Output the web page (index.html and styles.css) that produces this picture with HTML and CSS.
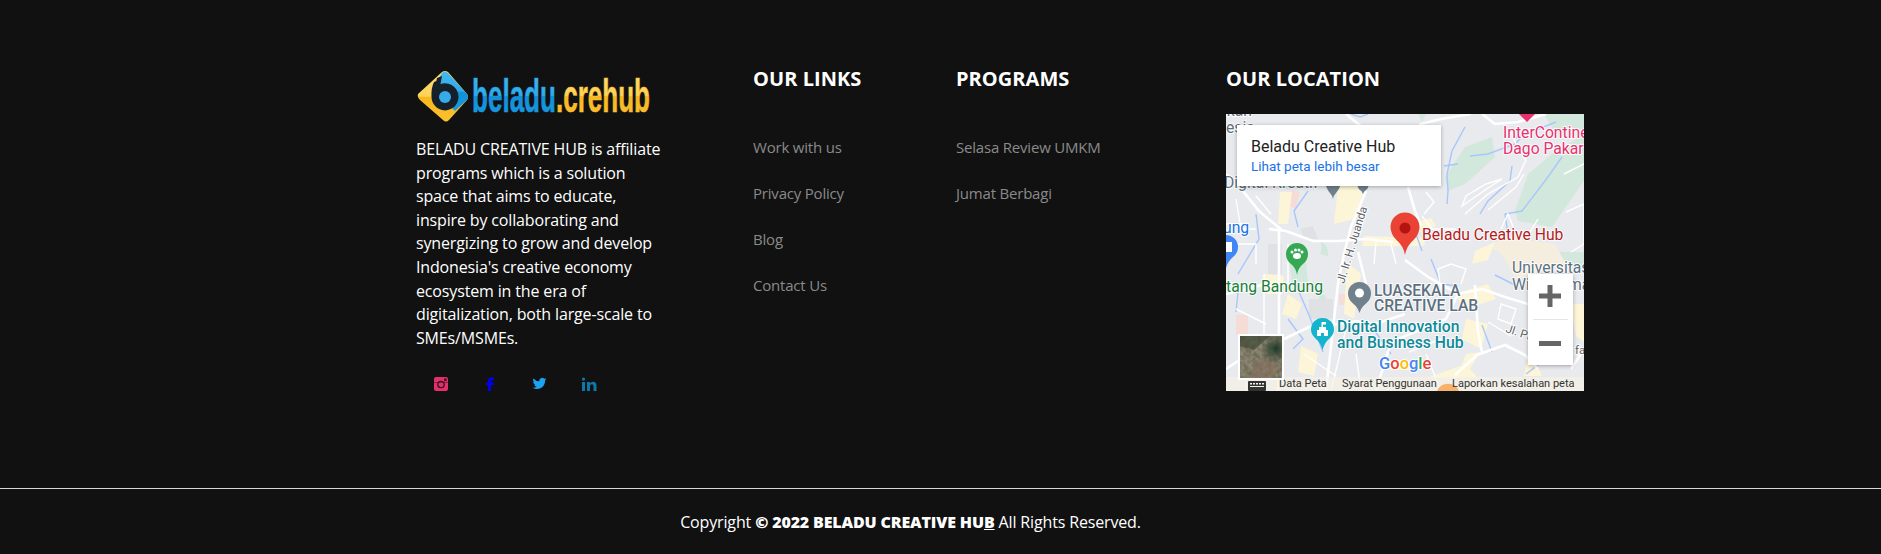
FILE: index.html
```html
<!DOCTYPE html>
<html lang="en">
<head>
<meta charset="utf-8">
<title>Beladu Creative Hub</title>
<link rel="stylesheet" href="styles.css">
</head>
<body>
<footer class="footer">
  <div class="columns">
    <section class="about">
      <svg class="logo" viewBox="0 0 240 54" width="240" height="54" role="img">
        <defs>
          <linearGradient id="blue" x1="0" y1="0" x2="0" y2="1"><stop offset="0" stop-color="#45b9f0"/><stop offset=".5" stop-color="#2faae9"/><stop offset=".52" stop-color="#0f90da"/><stop offset="1" stop-color="#1a9be0"/></linearGradient>
          <linearGradient id="gold" x1="0" y1="0" x2="0" y2="1"><stop offset="0" stop-color="#ffdc72"/><stop offset=".5" stop-color="#fed255"/><stop offset=".52" stop-color="#f8b71f"/><stop offset="1" stop-color="#fcc130"/></linearGradient>
        </defs>
        <path d="M2 24 L26 2 Q29 0 32 2 L51 24 Q53 27 51 30 L33 50 Q30 53 27 50 L4 30 Q1 27 2 24Z" fill="url(#gold)"/>
        <path d="M20 13 L26 3 Q29 0 32 3 L51 24 Q53 27 51 30 L39 41 L28 30Z" fill="url(#blue)"/>
        <path d="M18 12 L23 10 L21 16 A13.500 13.500 0 1 1 15.500 27 Q15 18 18 12Z" fill="#16202a"/>
        <path d="M21 8 L18 22 L23 22 L26 6Z" fill="#16202a"/>
        <circle cx="29" cy="27" r="6" fill="#35ace9"/>
        <text class="logo-text" x="56" y="42" textLength="178" lengthAdjust="spacingAndGlyphs"><tspan class="logo-blue">beladu</tspan><tspan class="logo-gold">.crehub</tspan></text>
      </svg>
      <p class="about-text">BELADU CREATIVE HUB is affiliate programs which is a solution space that aims to educate, inspire by collaborating and synergizing to grow and develop Indonesia's creative economy ecosystem in the era of digitalization, both large-scale to SMEs/MSMEs.</p>
      <ul class="social">
        <li><svg viewBox="0 0 14 14" width="14" height="14"><rect width="14" height="14" rx="2" fill="#e1306c"/><circle cx="7" cy="7.500" r="3.200" fill="none" stroke="#3a1020" stroke-width="1.300"/><rect x="10" y="1.500" width="2.600" height="2.600" fill="#3a1020"/><rect y="5" width="14" height="1" fill="#3a1020" opacity=".5"/></svg></li>
        <li><svg viewBox="0 0 14 14" width="14" height="14"><path d="M3 14V8H1V5.500H3V3.500Q3 .5 6.500 .5H9V3.200H7.500Q6 3.200 6 4.500V5.500H9L8.500 8H6V14Z" fill="#0000ee" transform="translate(2 0)"/></svg></li>
        <li><svg viewBox="0 0 24 24" width="15" height="15"><path d="M23 5.100a9 9 0 0 1-2.600.7 4.500 4.500 0 0 0 2-2.500 9 9 0 0 1-2.900 1.100 4.500 4.500 0 0 0-7.700 4.100A12.800 12.800 0 0 1 2.500 3.800a4.500 4.500 0 0 0 1.400 6 4.500 4.500 0 0 1-2-.6c0 2.200 1.500 4 3.600 4.500a4.500 4.500 0 0 1-2 .1 4.500 4.500 0 0 0 4.200 3.100A9 9 0 0 1 1 18.800 12.800 12.800 0 0 0 8 20.800c8.300 0 12.900-6.900 12.900-12.900v-.6A9 9 0 0 0 23 5.100z" fill="#1da1f2"/></svg></li>
        <li><svg viewBox="0 0 15 14" width="15" height="14"><path d="M0 5H3V14H0ZM1.500 .5A1.600 1.600 0 1 1 1.500 3.700 1.600 1.600 0 0 1 1.500 .5ZM5 5H8V6.300Q9 4.800 11 4.800 14.500 4.800 14.500 9V14H11.500V9.500Q11.500 7.300 9.800 7.300 8 7.300 8 9.500V14H5Z" fill="#0e76a8"/></svg></li>
      </ul>
    </section>
    <nav class="link-col">
      <h4 class="col-title">OUR LINKS</h4>
      <ul class="links">
        <li><a>Work with us</a></li>
        <li><a>Privacy Policy</a></li>
        <li><a>Blog</a></li>
        <li><a>Contact Us</a></li>
      </ul>
    </nav>
    <nav class="link-col">
      <h4 class="col-title">PROGRAMS</h4>
      <ul class="links">
        <li><a>Selasa Review UMKM</a></li>
        <li><a>Jumat Berbagi</a></li>
      </ul>
    </nav>
    <section class="location">
      <h4 class="col-title">OUR LOCATION</h4>
      <div class="map">
        <svg class="map-canvas" viewBox="0 0 358 277" width="358" height="277">
          <rect width="358" height="277" fill="#e8eaed"/>
          <g fill="#d3e8dc">
            <path d="M219 63L239 33L266 23L269 43L239 70L222 77Z"/>
            <path d="M289 97L302 60L326 40L358 20V67L342 90L326 113L292 107Z"/>
            <path d="M318 0H358V15L330 20Z"/>
            <path d="M192 0H200L196 8Z"/>
            <path d="M318 138H358V160L340 150Z"/>
            <path d="M93 181H99L101 190H94Z"/>
            <path d="M63 148L80 148L82 168H66Z"/>
            <path d="M94 127Q103 130 102 142L94 140Q97 133 94 127Z"/>
          </g>
          <g fill="#f5eede">
            <path d="M262 132L279 123L329 130L340 150L290 165L276 140Z"/>
          </g>
          <g fill="#dfe1e5">
            <path d="M83 185H107V205H83Z"/><path d="M74 115L87 112L92 125L78 125Z"/><path d="M42 130H56V160H42Z"/>
          </g>
          <g fill="#f6dcd6">
            <path d="M10 201H22V221H10Z"/><path d="M113 180H120V191H113Z"/><path d="M66 76L74 78L70 95L64 92Z"/>
          </g>
          <g fill="#fdf5d8">
            <path d="M112 72L140 72L128 105L108 110Z"/>
            <path d="M54 78L66 78L62 110L52 110Z"/>
            <path d="M138 122L200 124L198 132L136 132Z"/>
            <path d="M62 180L76 190L70 205L56 200Z"/>
            <path d="M38 160L58 162L56 180L40 180Z"/>
            <path d="M121 148L135 160L128 205L118 200Z"/>
            <path d="M249 137L269 128L262 146L246 150Z"/>
            <path d="M228 180L262 170L270 185L240 195Z"/>
            <path d="M240 205L262 210L255 235L236 225Z"/>
            <path d="M155 252L172 245L186 256H165Z"/>
            <path d="M240 240L254 238L240 262L232 260Z"/>
            <path d="M304 232L316 262H298Z"/>
            <path d="M75 232L92 240L88 262L72 258Z"/>
            <path d="M200 264L240 250L252 264Z"/>
            <path d="M190 108L205 104L210 112L192 118Z"/>
            <path d="M344 190L358 190V228L350 222Z"/>
          </g>
          <g fill="none" stroke="#a8c7fa" stroke-width="1.400">
            <path d="M239 13L226 37L221 60L222 77L221 90"/>
            <path d="M244 42L262 40L289 30L299 20"/>
            <path d="M286 52L284 67L262 87L254 100"/>
            <path d="M336 43L319 67L296 97L279 100L282 120"/>
            <path d="M82 77L68 97L72 113"/>
            <path d="M70 171L83 201L97 238"/>
            <path d="M12 178L10 198"/>
            <path d="M62 205L77 225L67 235"/>
            <path d="M269 161L289 171"/>
            <path d="M256 211L266 238"/>
            <path d="M125 0L134 3L142 0"/>
            <path d="M218 52L232 50"/>
            <path d="M190 120L196 137"/>
            <path d="M330 8L290 24"/>
            <path d="M30 100L33 125L12 160"/>
            <path d="M205 145L215 170L232 172"/>
            <path d="M300 260L340 230"/>
            <path d="M144 210L165 240"/>
          </g>
          <g fill="none" stroke="#fff" stroke-width="2.600">
            <path d="M140 77L125 113L118 140L112 170L100 277"/>
            <path d="M43 115L60 117L87 127L113 127L140 125L167 128"/>
            <path d="M0 60L17 77L33 97L57 117"/>
            <path d="M53 117L53 222L52 277"/>
            <path d="M58 225L83 213L110 210L130 207L150 210L179 200"/>
            <path d="M132 138L140 170"/>
            <path d="M179 146L202 163L232 180L256 175L279 183L302 190L345 201"/>
            <path d="M249 171L252 218L256 238"/>
            <path d="M229 261L251 241L279 231L299 241L312 255"/>
            <path d="M182 73L189 97L195 112"/>
            <path d="M175 35L195 10L215 5L245 0"/>
            <path d="M256 0L269 10L292 8L320 0"/>
            <path d="M0 180L40 170L55 180"/>
            <path d="M232 180L220 205L165 228L150 277"/>
            <path d="M0 255L30 235L53 225"/>
            <path d="M120 0L142 18L175 35"/>
            <path d="M345 255L358 235"/>
          </g>
          <g fill="none" stroke="#fff" stroke-width="1.400">
            <path d="M239 100L262 80L292 63L300 46L296 42"/>
            <path d="M236 92L262 74L276 65L260 70L240 82Z"/>
            <path d="M262 96L290 73L298 60"/>
            <path d="M200 78L208 88L198 100"/>
            <path d="M196 102L206 115L230 115"/>
            <path d="M275 115L282 100L290 120"/>
            <path d="M300 125L312 105"/>
            <path d="M340 98L358 90V130L345 138"/>
            <path d="M338 60L358 50"/>
            <path d="M285 18L290 30"/>
            <path d="M10 85L15 115H30M0 110H20M8 130H30V150"/>
            <path d="M30 82L45 100"/>
            <path d="M10 195L40 210M20 230V277M38 160V277"/>
            <path d="M62 130V170M78 240L110 262"/>
            <path d="M215 175L212 155L225 150L240 155L235 170"/>
            <path d="M275 190L290 195L285 210L272 205Z"/>
            <path d="M262 208L285 222"/>
            <path d="M120 215L105 277M130 240L135 277"/>
            <path d="M165 130L170 150M150 128L148 150"/>
            <path d="M320 210L312 250"/>
            <path d="M200 240L215 277"/>
            <path d="M335 200L328 235"/>
            <path d="M300 150L320 170"/>
            <path d="M183 238L215 225"/>
          </g>
          <text class="lab m-grey" x="-3" y="2">ikan</text>
          <text class="lab m-grey" x="0" y="19">esia</text>
          <text class="lab m-grey" x="-2" y="74">Digital Kreatif</text>
          <text class="lab m-pink" x="277" y="24">InterContinental</text>
          <text class="lab m-pink" x="277" y="40">Dago Pakar</text>
          <text class="lab m-blue" x="-3" y="119">ung</text>
          <text class="lab m-green" x="0" y="178">tang Bandung</text>
          <text class="lab m-grey m-bold" x="148" y="182">LUASEKALA</text>
          <text class="lab m-grey m-bold" x="148" y="197">CREATIVE LAB</text>
          <text class="lab m-teal" x="111" y="218">Digital Innovation</text>
          <text class="lab m-teal" x="111" y="234">and Business Hub</text>
          <text class="lab m-grey" x="286" y="159">Universitas</text>
          <text class="lab m-grey" x="286" y="176">Widyatama</text>
          <text class="lab m-red" x="196" y="126">Beladu Creative Hub</text>
          <text class="road" transform="rotate(-73 118 170)" x="118" y="170">Jl. Ir. H. Juanda</text>
          <text class="road" transform="rotate(18 279 218)" x="279" y="218">Jl. Pr</text>
          <text class="road" x="349" y="240">fa</text>
          <path d="M293 0H309L301 8Z" fill="#e8316f"/>
          <path d="M99 70H115Q113 76 110 79T107 85Q106 81 104 79T99 70Z" fill="#70808d"/>
          <path d="M131 70H143Q142 75 140 76T137 80Q136 77 134 76T131 70Z" fill="#70808d"/>
          <path d="M179 98.500a14.500 14.500 0 0 1 14.500 14.500q0 7-6 13-7 6-8.500 15-1.500-9-8.500-15-6-6-6-13a14.500 14.500 0 0 1 14.500-14.500z" fill="#ea4335"/>
          <circle cx="179" cy="114" r="5.500" fill="#b31412"/>
          <path d="M71 129a11 11 0 0 1 11 11q0 6-5 10-5 4-6 11-1-7-6-11-5-4-5-10a11 11 0 0 1 11-11z" fill="#34a853"/>
          <g fill="#fff"><ellipse cx="71" cy="142" rx="4" ry="3"/><circle cx="66" cy="138" r="1.500"/><circle cx="69.500" cy="136" r="1.500"/><circle cx="73" cy="136" r="1.500"/><circle cx="76" cy="138" r="1.500"/></g>
          <path d="M133.500 168a11.500 11.500 0 0 1 11.500 11.500q0 6-5 10-5 4-6.500 9.500-1.500-5.500-6.500-9.500-5-4-5-10a11.500 11.500 0 0 1 11.500-11.500z" fill="#70808d"/>
          <circle cx="133.500" cy="179" r="4.500" fill="#fff"/>
          <path d="M96.500 204a11.500 11.500 0 0 1 11.500 11.500q0 5-4.500 9-5 4-7 11.500-2-7.500-7-11.500-4.500-4-4.500-9a11.500 11.500 0 0 1 11.500-11.500z" fill="#12b5cb"/>
          <path d="M91 222V216H93V213H95.500V208H100V210.500H97V213H100V216H102V222H98V219H95V222Z" fill="#fff"/>
          <path d="M-12 133a12 12 0 0 1 24 0q0 6-5 10-5 4-7 11-2-7-7-11-5-4-5-10z" fill="#4285f4"/>
          <path d="M0 128H6V138H0Z" fill="#fff"/>
          <text class="g-logo" x="153" y="255"><tspan fill="#4285f4">G</tspan><tspan fill="#ea4335">o</tspan><tspan fill="#fbbc04">o</tspan><tspan fill="#4285f4">g</tspan><tspan fill="#34a853">l</tspan><tspan fill="#ea4335">e</tspan></text>
          <rect y="263" width="358" height="14" fill="#f5f1e6" opacity=".7"/>
          <rect x="22" y="267" width="18" height="10" rx="1" fill="#333"/>
          <g fill="#f5f1e6"><rect x="24" y="269" width="2" height="1.500"/><rect x="27" y="269" width="2" height="1.500"/><rect x="30" y="269" width="2" height="1.500"/><rect x="33" y="269" width="2" height="1.500"/><rect x="36" y="269" width="2" height="1.500"/><rect x="24" y="272" width="14" height="1"/></g>
          <path d="M212 277a12 12 0 0 1 22 0Z" fill="#f6b26b" transform="translate(-1 0)"/>
          <text class="m-foot" x="53" y="273">Data Peta</text>
          <text class="m-foot" x="116" y="273">Syarat Penggunaan</text>
          <text class="m-foot" x="226" y="273">Laporkan kesalahan peta</text>
        </svg>
        <div class="info">
          <div class="info-name">Beladu Creative Hub</div>
          <div class="info-link">Lihat peta lebih besar</div>
        </div>
        <div class="satellite">
          <svg viewBox="0 0 42 42" width="42" height="42">
            <defs>
              <filter id="noise" x="0" y="0" width="100%" height="100%"><feTurbulence type="fractalNoise" baseFrequency=".22" numOctaves="3" seed="4"/><feColorMatrix values="0 0 0 0 .35  0 0 0 0 .32  0 0 0 0 .25  0 0 0 1.500 -.45"/></filter>
              <radialGradient id="sat-dark" cx=".85" cy=".3" r=".35"><stop offset="0" stop-color="#1f3a28"/><stop offset="1" stop-color="#1f3a28" stop-opacity="0"/></radialGradient>
            </defs>
            <rect width="42" height="42" fill="#6f6a55"/>
            <rect width="42" height="42" filter="url(#noise)"/>
            <path d="M0 0H30L14 14L0 10Z" fill="#3f4a38" opacity=".7"/>
            <path d="M16 24L38 26L34 42H10Z" fill="#86705d" opacity=".6"/>
            <rect width="42" height="42" fill="url(#sat-dark)"/>
          </svg>
        </div>
        <div class="zoom">
          <svg viewBox="0 0 45 91" width="45" height="91"><path d="M19.500 11h5v8.500h8.500v5h-8.500v8.500h-5v-8.500h-8.500v-5h8.500z" fill="#666"/><rect x="5" y="45" width="35" height="1" fill="#e6e6e6"/><rect x="11" y="67" width="22" height="5" fill="#666"/></svg>
        </div>
      </div>
    </section>
  </div>
  <div class="copyright">Copyright <strong>© 2022 BELADU CREATIVE HU<u>B</u></strong> All Rights Reserved.</div>
</footer>
</body>
</html>
```
FILE: styles.css
```css
* { box-sizing: border-box; }
html, body { margin: 0; }
body { background: #111; color: #fff; font-family: "Open Sans", sans-serif; }
.footer { height: 554px; background: #111; }
.columns { display: grid; grid-template-columns: 337px 203px 270px 358px; width: 1168px; height: 488px; margin-left: 416px; padding-top: 65px; }
.logo { display: block; margin: 5px 0 14px; }
.logo-text { font-family: "Liberation Sans Narrow", "Liberation Sans", sans-serif; font-weight: 700; font-size: 47px; stroke-width: .6px; }
.logo-blue { fill: url(#blue); stroke: #1a9be0; }
.logo-gold { fill: url(#gold); stroke: #fcc130; }
.about-text { width: 248px; margin: 0; font-size: 16px; line-height: 23.6px; letter-spacing: -.15px; }
.social { display: flex; list-style: none; margin: 26px 0 0; padding: 0 0 0 17px; gap: 34.500px; }
.social li { display: flex; width: 15px; height: 15px; align-items: center; justify-content: center; }
.col-title { margin: 0; font-size: 20px; line-height: 27px; font-weight: 700; letter-spacing: .05px; }
.links { list-style: none; margin: 43px 0 0; padding: 0; }
.links li { height: 46px; font-size: 15px; line-height: 24px; letter-spacing: -.2px; color: #8a8a8a; }
.map { position: relative; width: 358px; height: 277px; margin-top: 22px; overflow: hidden; }
.map-canvas { display: block; }
.map-canvas text { font-family: Roboto, sans-serif; }
.lab { font-size: 15.700px; paint-order: stroke; stroke: #fff; stroke-width: 2px; stroke-opacity: .85; }
.m-bold { font-weight: 500; }
.m-grey { fill: #5b7080; }
.m-pink { fill: #e8316f; }
.m-blue { fill: #1a73e8; }
.m-green { fill: #188038; }
.m-teal { fill: #0d8a99; font-weight: 500; }
.m-red { fill: #b3201c; }
.road { fill: #5f6368; font-size: 11.500px; paint-order: stroke; stroke: #fff; stroke-width: 2px; }
.m-foot { fill: #333; font-size: 11px; }
.g-logo { font-size: 16.500px; font-weight: 500; paint-order: stroke; stroke: #fff; stroke-width: 2px; }
.info { position: absolute; left: 11px; top: 11px; width: 204px; height: 61px; padding: 11px 0 0 14px; background: #fff; box-shadow: 0 1px 4px rgba(0,0,0,.3); font-family: Roboto, sans-serif; }
.info-name { font-size: 16px; line-height: 21px; color: #222; }
.info-link { font-size: 13.500px; line-height: 18px; color: #1a73e8; }
.satellite { position: absolute; left: 12px; top: 220px; width: 46px; height: 46px; border: 2px solid #fff; }
.satellite svg { display: block; }
.zoom { position: absolute; left: 302px; top: 160px; width: 45px; height: 91px; background: #fff; box-shadow: 0 1px 4px rgba(0,0,0,.3); }
.zoom svg { display: block; }
.copyright { border-top: 1px solid #d8d8d8; height: 66px; padding: 21px 60px 0 0; text-align: center; font-size: 16px; line-height: 24px; letter-spacing: -.15px; }
.copyright strong { font-weight: 800; }
```
